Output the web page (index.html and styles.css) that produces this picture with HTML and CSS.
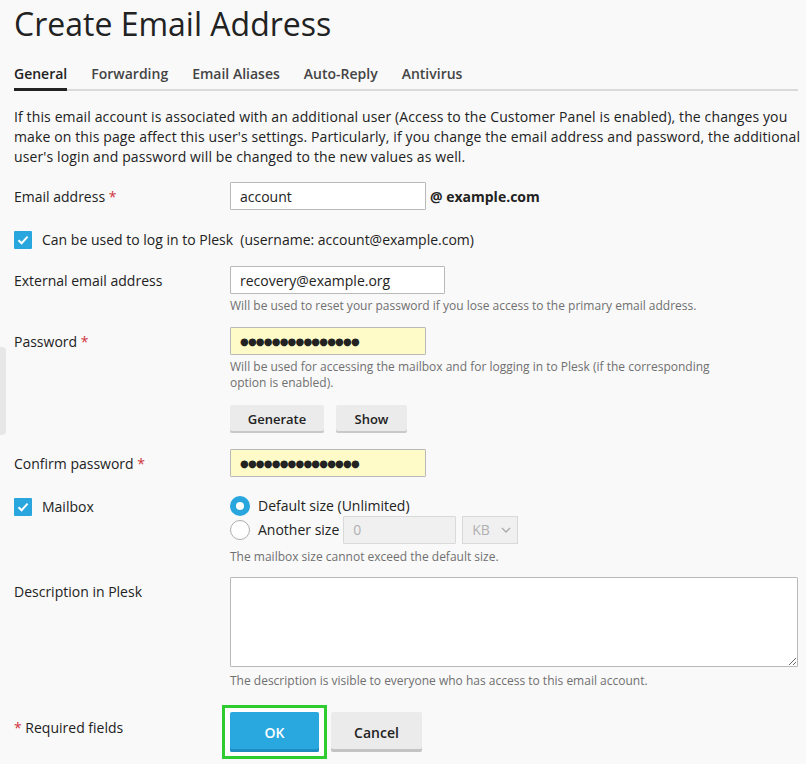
FILE: index.html
```html
<!DOCTYPE html>
<html>
<head>
<meta charset="utf-8">
<link rel="stylesheet" href="styles.css">
</head>
<body>
<div class="side-handle"></div>
<div class="page">
  <h1 class="title">Create Email Address</h1>
  <nav class="tabs">
    <span class="tab active">General</span>
    <span class="tab">Forwarding</span>
    <span class="tab">Email Aliases</span>
    <span class="tab">Auto-Reply</span>
    <span class="tab">Antivirus</span>
  </nav>
  <p class="intro">If this email account is associated with an additional user (Access to the Customer Panel is enabled), the changes you make on this page affect this user's settings. Particularly, if you change the email address and password, the additional user's login and password will be changed to the new values as well.</p>

  <div class="form">
    <div class="row r-email">
      <div class="label">Email address <span class="req">*</span></div>
      <div class="field inline">
        <input class="input w196" type="text" value="account">
        <span class="domain">@ example.com</span>
      </div>
    </div>

    <div class="row r-login">
      <label class="check-line"><span class="checkbox"><svg viewBox="0 0 18 18" width="18" height="18"><path d="M4.5 9.2 L7.6 12.2 L13.6 5.6" fill="none" stroke="#fff" stroke-width="2"/></svg></span>Can be used to log in to Plesk&nbsp; (username: account@example.com)</label>
    </div>

    <div class="row r-ext">
      <div class="label">External email address</div>
      <div class="field">
        <input class="input w215" type="text" value="recovery@example.org">
        <div class="hint">Will be used to reset your password if you lose access to the primary email address.</div>
      </div>
    </div>

    <div class="row r-pass">
      <div class="label">Password <span class="req">*</span></div>
      <div class="field">
        <div class="input pw w196">●●●●●●●●●●●●●●●</div>
        <div class="hint narrow">Will be used for accessing the mailbox and for logging in to Plesk (if the corresponding option is enabled).</div>
        <div class="btns">
          <button class="btn gen">Generate</button>
          <button class="btn show">Show</button>
        </div>
      </div>
    </div>

    <div class="row r-confirm">
      <div class="label">Confirm password <span class="req">*</span></div>
      <div class="field">
        <div class="input pw w196">●●●●●●●●●●●●●●●</div>
      </div>
    </div>

    <div class="row r-mailbox">
      <div class="label"><label class="check-line"><span class="checkbox"><svg viewBox="0 0 18 18" width="18" height="18"><path d="M4.5 9.2 L7.6 12.2 L13.6 5.6" fill="none" stroke="#fff" stroke-width="2"/></svg></span>Mailbox</label></div>
      <div class="field">
        <div class="radio-line"><span class="radio on"></span>Default size (Unlimited)</div>
        <div class="radio-line"><span class="radio"></span>Another size <span class="input dis w112">0</span><span class="select dis">KB<svg width="10" height="6" viewBox="0 0 10 6"><path d="M1 1 L5 5 L9 1" fill="none" stroke="#aaa" stroke-width="1.3"/></svg></span></div>
        <div class="hint">The mailbox size cannot exceed the default size.</div>
      </div>
    </div>

    <div class="row r-desc">
      <div class="label">Description in Plesk</div>
      <div class="field grow">
        <textarea class="textarea"></textarea>
        <div class="hint">The description is visible to everyone who has access to this email account.</div>
      </div>
    </div>

    <div class="row r-actions">
      <div class="label"><span class="req">*</span> Required fields</div>
      <div class="field inline actions">
        <span class="focus-ring"><button class="btn primary">OK</button></span>
        <button class="btn cancel">Cancel</button>
      </div>
    </div>
  </div>
</div>
</body>
</html>
```
FILE: styles.css
```css
html, body {
  margin: 0;
  padding: 0;
  background: #f9f9f9;
}
body {
  font-family: "Open Sans", "DejaVu Sans", sans-serif;
  color: #222;
  font-size: 14px;
}
.side-handle {
  position: absolute;
  left: 0;
  top: 347px;
  width: 6px;
  height: 88px;
  background: #e7e7e7;
  border-radius: 0 4px 4px 0;
}
.page {
  padding: 0 8px 0 14px;
}
.title {
  margin: 0;
  padding-top: 2px;
  font-size: 32px;
  font-weight: 400;
  line-height: 44px;
  color: #222;
}
.tabs {
  display: flex;
  gap: 24px;
  margin-top: 18px;
  border-bottom: 2px solid #dadada;
}
.tab {
  font-size: 14px;
  font-weight: 600;
  color: #444;
  line-height: 20px;
  padding-bottom: 4px;
  margin-bottom: -2px;
  border-bottom: 3px solid transparent;
}
.tab.active {
  color: #222;
  border-bottom-color: #222;
}
.intro {
  margin: 16px -7px 0 0;
  line-height: 20px;
  font-size: 14px;
  letter-spacing: 0.12px;
}
.form {
  margin-top: 15px;
}
.row {
  display: grid;
  grid-template-columns: 216px 1fr;
  align-items: start;
}
.label {
  line-height: 20px;
  padding-top: 5px;
}
.req {
  color: #d0343b;
}
.field.inline {
  display: flex;
  align-items: center;
  gap: 4px;
}
.input {
  box-sizing: border-box;
  height: 28px;
  border: 1px solid #b9b9b9;
  background: #fff;
  padding: 0 9px;
  font-family: inherit;
  font-size: 14px;
  color: #222;
  border-radius: 1px;
  outline: none;
  display: block;
}
.w196 { width: 196px; }
.w215 { width: 215px; }
.w112 { width: 113px; }
.domain {
  font-weight: 700;
  color: #222;
}
.r-login {
  display: block;
  margin-top: 20px;
}
.check-line {
  display: flex;
  align-items: center;
  gap: 10px;
  line-height: 20px;
}
.checkbox {
  width: 18px;
  height: 18px;
  background: #29a6de;
  border-radius: 1px;
  display: inline-flex;
}
.r-ext { margin-top: 16px; }
.hint {
  font-size: 12px;
  color: #707070;
  line-height: 16px;
  margin-top: 4px;
}
.hint.narrow { max-width: 490px; }
.r-pass { margin-top: 13px; }
.pw {
  background: #fffbc8;
  line-height: 26px;
  font-size: 10px;
  letter-spacing: -0.8px;
  color: #222;
}
.btns {
  display: flex;
  gap: 12px;
  margin-top: 14px;
}
.btn {
  font-family: inherit;
  font-size: 13px;
  font-weight: 600;
  border: none;
  border-radius: 2px;
  background: #ebebeb;
  color: #222;
  box-shadow: inset 0 -2px 0 #c9c9c9;
  padding: 0;
  cursor: pointer;
}
.gen { width: 94px; height: 28px; }
.show { width: 71px; height: 28px; }
.r-confirm { margin-top: 16px; }
.r-mailbox { margin-top: 19px; }
.r-mailbox .label { padding-top: 1px; }
.radio-line {
  display: flex;
  align-items: center;
  gap: 8px;
  height: 20px;
  line-height: 20px;
}
.radio-line + .radio-line {
  height: 28px;
  margin-top: 0;
}
.radio {
  box-sizing: border-box;
  width: 20px;
  height: 20px;
  border-radius: 50%;
  border: 1px solid #adadad;
  background: #fff;
  flex: none;
}
.radio.on {
  border: 6px solid #29a6de;
  background: #fff;
}
.input.dis {
  background: #f0f0f0;
  border-color: #d9d9d9;
  color: #b0b0b0;
  line-height: 26px;
  margin-left: -4px;
}
.select.dis {
  box-sizing: border-box;
  height: 28px;
  width: 56px;
  border: 1px solid #d9d9d9;
  background: #f0f0f0;
  color: #b0b0b0;
  display: inline-flex;
  align-items: center;
  justify-content: space-between;
  padding: 0 6px 0 9px;
  margin-left: -2px;
}
.r-mailbox .hint { margin-top: 5px; }
.r-desc { margin-top: 12px; }
.textarea {
  box-sizing: border-box;
  display: block;
  width: 568px;
  height: 90px;
  border: 1px solid #b9b9b9;
  background: #fff;
  resize: vertical;
  border-radius: 1px;
}
.r-desc .hint { margin-top: 6px; }
.r-actions {
  margin-top: 16px;
  align-items: center;
}
.r-actions .label {
  padding-top: 0;
  margin-top: -8px;
}
.actions {
  margin-left: -8px;
  gap: 7px;
}
.focus-ring {
  display: inline-block;
  border: 3px solid #2ecc2e;
  padding: 4px 5px 4px 5px;
  background: #fff;
}
.primary {
  display: block;
  width: 89px;
  height: 40px;
  background: #29a8df;
  color: #fff;
  box-shadow: inset 0 -3px 0 #1f8dbf;
  font-size: 14px;
}
.cancel {
  width: 91px;
  height: 40px;
  font-size: 14px;
  box-shadow: inset 0 -3px 0 #c4c4c4;
}
```
